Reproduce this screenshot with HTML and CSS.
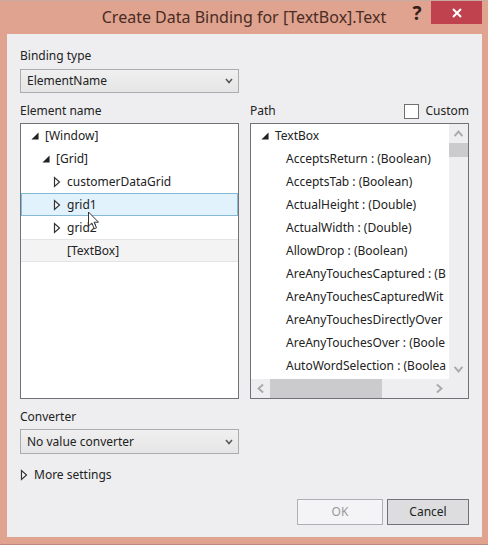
FILE: index.html
```html
<!DOCTYPE html>
<html lang="en">
<head>
<meta charset="utf-8">
<title>Create Data Binding for [TextBox].Text</title>
<link rel="stylesheet" href="styles.css">
</head>
<body>
<svg class="symbols" aria-hidden="true">
  <symbol id="open" viewBox="0 0 9 9"><path d="M8.5 .5V8.500H.5z" fill="#222"/></symbol>
  <symbol id="closed" viewBox="0 0 9 12"><path d="M1.500 1.500V10.500L6.500 6z" fill="#fff" stroke="#333" stroke-width="1.200"/></symbol>
  <symbol id="chevron" viewBox="0 0 10 10"><path d="M2 3L5 6.500L8 3" fill="none" stroke="currentColor" stroke-width="1.500"/></symbol>
</svg>
<main class="window">
  <header class="titlebar">
    <h1 class="title">Create Data Binding for [TextBox].Text</h1>
    <button class="help" type="button">?</button>
    <button class="close" type="button" aria-label="Close"><svg width="10" height="10" viewBox="0 0 10 10"><path d="M1 1L9 9M9 1L1 9" stroke="#fff" stroke-width="2"/></svg></button>
  </header>
  <form class="content">
    <div class="columns">
      <div class="field">
        <label class="label" for="type">Binding type</label>
        <div class="combo">
          <select id="type"><option>ElementName</option></select>
          <svg class="arrow"><use href="#chevron"/></svg>
        </div>
      </div>
    </div>
    <div class="columns lists">
      <section class="pane">
        <h2 class="label">Element name</h2>
        <div class="box">
          <ul class="tree">
            <li class="row"><button class="toggle" type="button" aria-label="Collapse"><svg class="open"><use href="#open"/></svg></button>[Window]</li>
            <li class="row level2"><button class="toggle" type="button" aria-label="Collapse"><svg class="open"><use href="#open"/></svg></button>[Grid]</li>
            <li class="row level3"><button class="toggle" type="button" aria-label="Expand"><svg class="closed"><use href="#closed"/></svg></button>customerDataGrid</li>
            <li class="row level3 hover"><button class="toggle" type="button" aria-label="Expand"><svg class="closed"><use href="#closed"/></svg></button>grid1
              <svg class="cursor" viewBox="0 0 12 19"><path d="M1 1V15L4.300 12L6.800 17.800L9 16.800L6.600 11.200H11z" fill="#fff" stroke="#333"/></svg></li>
            <li class="row level3"><button class="toggle" type="button" aria-label="Expand"><svg class="closed"><use href="#closed"/></svg></button>grid2</li>
            <li class="row level3 selected"><span class="toggle"></span>[TextBox]</li>
          </ul>
        </div>
      </section>
      <section class="pane">
        <div class="pane-head">
          <h2 class="label">Path</h2>
          <label class="custom"><input type="checkbox"> Custom</label>
        </div>
        <div class="box scrollable">
          <ul class="tree">
            <li class="row"><button class="toggle" type="button" aria-label="Collapse"><svg class="open"><use href="#open"/></svg></button>TextBox</li>
            <li class="row level2"><span class="toggle"></span>AcceptsReturn : (Boolean)</li>
            <li class="row level2"><span class="toggle"></span>AcceptsTab : (Boolean)</li>
            <li class="row level2"><span class="toggle"></span>ActualHeight : (Double)</li>
            <li class="row level2"><span class="toggle"></span>ActualWidth : (Double)</li>
            <li class="row level2"><span class="toggle"></span>AllowDrop : (Boolean)</li>
            <li class="row level2"><span class="toggle"></span>AreAnyTouchesCaptured : (B</li>
            <li class="row level2"><span class="toggle"></span>AreAnyTouchesCapturedWit</li>
            <li class="row level2"><span class="toggle"></span>AreAnyTouchesDirectlyOver</li>
            <li class="row level2"><span class="toggle"></span>AreAnyTouchesOver : (Boole</li>
            <li class="row level2"><span class="toggle"></span>AutoWordSelection : (Boolea</li>
          </ul>
          <div class="bar vertical">
            <button class="step up" type="button" aria-label="Scroll up"><svg><use href="#chevron"/></svg></button>
            <div class="track"><div class="thumb"></div></div>
            <button class="step" type="button" aria-label="Scroll down"><svg><use href="#chevron"/></svg></button>
          </div>
          <div class="bar horizontal">
            <button class="step left" type="button" aria-label="Scroll left"><svg><use href="#chevron"/></svg></button>
            <div class="track"><div class="thumb"></div></div>
            <button class="step right" type="button" aria-label="Scroll right"><svg><use href="#chevron"/></svg></button>
          </div>
        </div>
      </section>
    </div>
    <div class="columns">
      <div class="field converter">
        <label class="label" for="converter">Converter</label>
        <div class="combo">
          <select id="converter"><option>No value converter</option></select>
          <svg class="arrow"><use href="#chevron"/></svg>
        </div>
      </div>
    </div>
    <button class="more" type="button"><svg class="closed"><use href="#closed"/></svg>More settings</button>
    <footer class="actions">
      <button class="action" type="button" disabled>OK</button>
      <button class="action" type="button">Cancel</button>
    </footer>
  </form>
</main>
</body>
</html>
```
FILE: styles.css
```css
* { box-sizing: border-box; }
body { margin: 0; font: 12px/20px "Noto Sans", "Open Sans", sans-serif; color: #222; }
button, select, input { font: inherit; color: inherit; margin: 0; padding: 0; }
button { background: none; border: 0; }
h1, h2, ul { margin: 0; padding: 0; font-weight: normal; list-style: none; }
svg { display: block; }
.symbols { position: absolute; width: 0; height: 0; }

.window {
  display: flex;
  flex-direction: column;
  min-height: 100vh;
  padding: 0 6px 7px 7px;
  background: #dfa38f;
  border-top: 1px solid #c9aaa1;
  border-bottom: 1px solid #b98a7d;
}
.titlebar { display: flex; align-items: flex-start; height: 33px; }
.title {
  flex: 1;
  padding-left: 74px;
  font-size: 16px;
  line-height: 33px;
  text-align: center;
  white-space: nowrap;
  color: #4a2c24;
}
.help { width: 20px; margin-right: 4px; font-size: 19px; line-height: 25px; font-weight: bold; color: #35201a; }
.close { display: grid; place-items: center; width: 51px; height: 23px; background: #c0424f; }

.content { flex: 1; display: flex; flex-direction: column; padding: 12px 13px; background: #eeeef0; }
.columns { display: grid; grid-template-columns: 1fr 1fr; gap: 11px; }
.lists { flex: 1; }
.label { display: block; font-size: 12px; line-height: 20px; }
.combo { display: grid; align-items: center; margin-top: 3px; }
.combo select {
  grid-area: 1 / 1;
  appearance: none;
  width: 100%;
  height: 24px;
  padding: 0 6px;
  border: 1px solid #acacae;
  border-radius: 0;
  background: linear-gradient(#f0f0f1, #e5e5e6);
}
.arrow { grid-area: 1 / 1; justify-self: end; width: 10px; height: 10px; margin-right: 5px; color: #555; pointer-events: none; }
.lists { margin-top: 8px; }
.pane { display: flex; flex-direction: column; min-width: 0; }
.pane-head { display: flex; justify-content: space-between; }
.custom { display: flex; align-items: center; gap: 6px; height: 20px; }
.custom input { appearance: none; width: 15px; height: 15px; border: 1px solid #707070; background: #fff; }
.box { flex: 1; margin-top: 2px; border: 1px solid #707276; background: #fff; }

.row { display: flex; align-items: center; height: 23px; padding-left: 10px; white-space: nowrap; border: solid transparent; border-width: 1px 0; }
.level2 { padding-left: 21px; }
.level3 { padding-left: 32px; }
.toggle { display: block; flex: none; width: 14px; }
.open { width: 8px; height: 8px; }
.closed { width: 9px; height: 12px; }
.hover { position: relative; background: #e1f2fc; border: 1px solid #86b9d3; padding-left: 31px; }
.selected { background: #f3f3f4; border-color: #e4e4e5; }
.cursor { position: absolute; left: 65px; top: 17px; width: 13px; height: 19px; z-index: 1; }

.scrollable { display: grid; grid-template: 1fr 19px / minmax(0, 1fr) 19px; background: #eeeef0; }
.scrollable .tree { overflow: hidden; background: #fff; }
.bar { display: flex; color: #aaaaad; }
.track { flex: 1; }
.thumb { background: #cbcacc; }
.step { display: grid; place-items: center; flex: none; width: 19px; height: 19px; }
.step svg { width: 13px; height: 13px; }
.vertical { flex-direction: column; }
.vertical .thumb { height: 14px; }
.horizontal .thumb { width: 70%; height: 100%; }
.up { transform: rotate(180deg); }
.left { transform: rotate(90deg); }
.right { transform: rotate(-90deg); }

.converter { margin-top: 8px; }
.converter .combo { margin-top: 2px; }
.converter select { height: 25px; }
.more { display: flex; align-items: center; align-self: flex-start; gap: 5px; margin-top: 11px; line-height: 20px; }
.actions { display: flex; justify-content: flex-end; gap: 4px; margin-top: 14px; }
.action { width: 86px; height: 26px; border: 1px solid #707276; background: #dddddf; }
.action + .action { width: 82px; }
.action:disabled { color: #98989b; background: #f4f4f6; border-color: #b0b0b4; }
```
